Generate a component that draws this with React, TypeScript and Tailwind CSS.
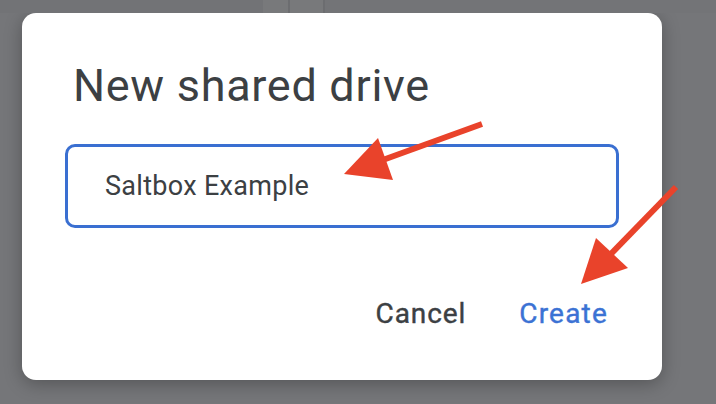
export default function App() {
  return (
    <div
      className="relative h-[404px] w-[716px] overflow-hidden bg-[#757679]"
      style={{ fontFamily: 'Roboto, "Noto Sans", sans-serif' }}
    >
      {/* faint page behind the scrim */}
      <div className="flex h-[13px] w-full">
        <div className="w-[263px] bg-[#727376]" />
        <div className="w-[25px] bg-[#78797b]" />
        <div className="w-[2px] bg-[#6c6d70]" />
        <div className="w-[33px] bg-[#78797b]" />
        <div className="w-[2px] bg-[#6c6d70]" />
        <div className="flex-1 bg-[#737477]" />
      </div>

      <div className="pl-[22px]">
        <div className="flex h-[367px] w-[640px] flex-col rounded-[14px] bg-white shadow-[0_4px_18px_rgba(0,0,0,0.28)]">
          <h1 className="pl-[51px] pt-[43px] text-[45px] leading-[60px] tracking-[0.7px] text-[#3c4043]">
            New shared drive
          </h1>

          <div className="ml-[43px] mt-[28px] flex h-[84px] w-[554px] items-center rounded-[10px] border-[3px] border-[#3a6fd1] pl-[37px]">
            <span className="text-[27px] tracking-[0.3px] text-[#3c4043]">Saltbox Example</span>
          </div>

          <div className="mt-[70px] flex justify-end gap-[53px] pr-[54px]">
            <button className="text-[28px] leading-[32px] tracking-[0.9px] text-[#3c4043] [-webkit-text-stroke:0.4px_#3c4043]">
              Cancel
            </button>
            <button className="text-[28px] leading-[32px] tracking-[1.2px] text-[#3b72d4] [-webkit-text-stroke:0.4px_#3b72d4]">
              Create
            </button>
          </div>
        </div>
      </div>

      {/* annotation arrows */}
      <svg className="pointer-events-none absolute left-0 top-0" width="716" height="404" viewBox="0 0 716 404">
        <line x1="482" y1="124" x2="380" y2="161" stroke="#e9432b" strokeWidth="6" />
        <polygon points="344,174 378,138 393,180" fill="#e9432b" />
        <line x1="676" y1="187" x2="606" y2="259" stroke="#e9432b" strokeWidth="6" />
        <polygon points="581,284 596,238 628,268" fill="#e9432b" />
      </svg>
    </div>
  );
}
